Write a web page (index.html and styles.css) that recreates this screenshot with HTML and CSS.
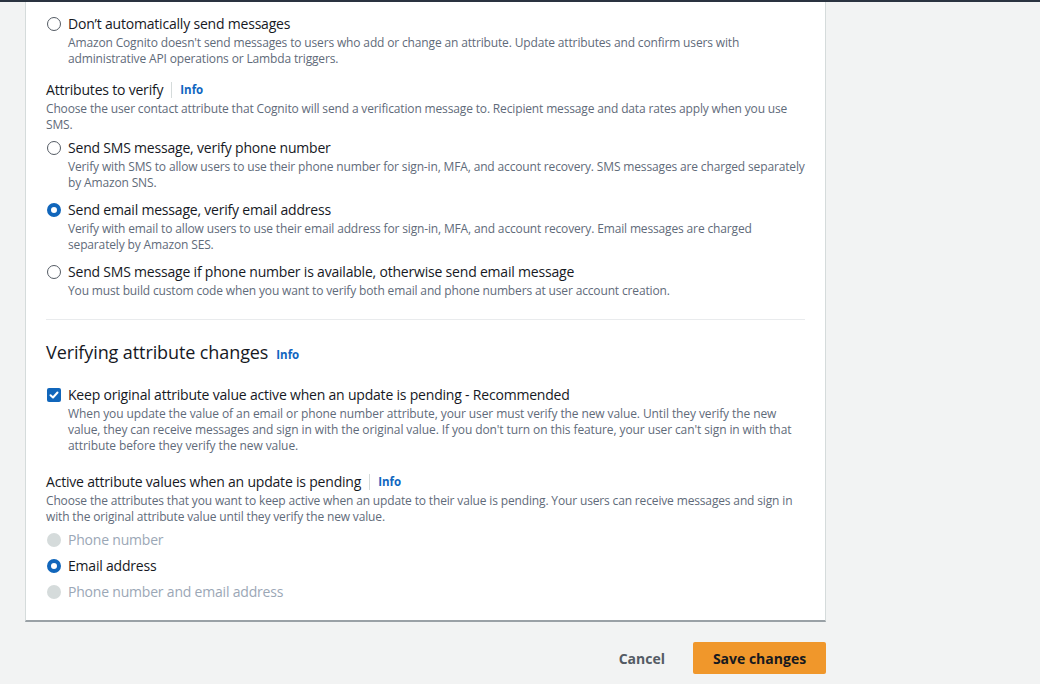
FILE: index.html
```html
<!DOCTYPE html>
<html lang="en">
<head>
<meta charset="utf-8">
<title>Verification settings</title>
<link rel="stylesheet" href="styles.css">
</head>
<body>
<div class="topbar"></div>
<div class="page">
  <div class="card">
    <div class="option first">
      <span class="radio"></span>
      <div class="opt-body">
        <div class="opt-title">Don’t automatically send messages</div>
        <div class="opt-desc">Amazon Cognito doesn't send messages to users who add or change an attribute. Update attributes and confirm users with administrative API operations or Lambda triggers.</div>
      </div>
    </div>

    <div class="field">
      <div class="field-label">Attributes to verify <span class="sep"></span><a class="info">Info</a></div>
      <div class="field-desc">Choose the user contact attribute that Cognito will send a verification message to. Recipient message and data rates apply when you use SMS.</div>
    </div>

    <div class="option">
      <span class="radio"></span>
      <div class="opt-body">
        <div class="opt-title">Send SMS message, verify phone number</div>
        <div class="opt-desc">Verify with SMS to allow users to use their phone number for sign-in, MFA, and account recovery. SMS messages are charged separately by Amazon SNS.</div>
      </div>
    </div>
    <div class="option">
      <span class="radio checked"></span>
      <div class="opt-body">
        <div class="opt-title">Send email message, verify email address</div>
        <div class="opt-desc">Verify with email to allow users to use their email address for sign-in, MFA, and account recovery. Email messages are charged separately by Amazon SES.</div>
      </div>
    </div>
    <div class="option">
      <span class="radio"></span>
      <div class="opt-body">
        <div class="opt-title">Send SMS message if phone number is available, otherwise send email message</div>
        <div class="opt-desc">You must build custom code when you want to verify both email and phone numbers at user account creation.</div>
      </div>
    </div>

    <hr class="divider">

    <h2 class="section-title">Verifying attribute changes <a class="info">Info</a></h2>

    <div class="option check-opt">
      <span class="checkbox">
        <svg width="10" height="10" viewBox="0 0 10 10"><path d="M1.5 5.2 L4 7.5 L8.5 2.5" fill="none" stroke="#fff" stroke-width="2" stroke-linecap="round" stroke-linejoin="round"/></svg>
      </span>
      <div class="opt-body">
        <div class="opt-title">Keep original attribute value active when an update is pending - Recommended</div>
        <div class="opt-desc loose">When you update the value of an email or phone number attribute, your user must verify the new value. Until they verify the new value, they can receive messages and sign in with the original value. If you don't turn on this feature, your user can't sign in with that attribute before they verify the new value.</div>
      </div>
    </div>

    <div class="field field2">
      <div class="field-label">Active attribute values when an update is pending <span class="sep"></span><a class="info">Info</a></div>
      <div class="field-desc">Choose the attributes that you want to keep active when an update to their value is pending. Your users can receive messages and sign in with the original attribute value until they verify the new value.</div>
    </div>

    <div class="simple-list">
      <div class="simple disabled"><span class="radio dis"></span>Phone number</div>
      <div class="simple"><span class="radio checked"></span>Email address</div>
      <div class="simple disabled"><span class="radio dis"></span>Phone number and email address</div>
    </div>
  </div>

  <div class="actions">
    <button class="btn-link">Cancel</button>
    <button class="btn-primary">Save changes</button>
  </div>
</div>
</body>
</html>
```

FILE: styles.css
```css
* { box-sizing: border-box; }
html, body { margin: 0; padding: 0; }
body {
  background: #f2f3f3;
  font-family: "Open Sans", "Noto Sans", Arial, sans-serif;
  color: #16191f;
  width: 1040px;
  height: 684px;
  overflow: hidden;
}
.topbar { height: 2px; background: #2a3340; }
.page { padding-left: 25px; width: 826px; }
.card {
  background: #fff;
  border-left: 1px solid #d5dbdb;
  border-right: 1px solid #d5dbdb;
  border-bottom: 2px solid #9aa1a6;
  padding: 12px 20px 18px 20px;
}
.option { display: flex; align-items: flex-start; margin-bottom: 9px; }
.option.first { margin-bottom: 13px; }
.radio {
  flex: none;
  width: 14px; height: 14px;
  border-radius: 50%;
  border: 1.5px solid #545b64;
  margin: 3px 7px 0 1px;
  background: #fff;
}
.radio.checked { border: 4px solid #1166bb; }
.radio.dis { border: none; background: #d5dbdb; }
.opt-body { flex: 1; }
.opt-title { font-size: 14px; line-height: 20px; letter-spacing: -0.2px; }
.opt-desc { font-size: 12px; line-height: 16px; color: #5f6b7a; margin-top: 1px; letter-spacing: -0.15px; }
.opt-desc.loose { letter-spacing: -0.1px; }
.field { margin-bottom: 5px; }
.field-label { font-size: 14px; line-height: 20px; display: flex; align-items: center; letter-spacing: -0.2px; }
.sep { display: inline-block; width: 1px; height: 16px; background: #d5dbdb; margin: 0 8px 0 8px; }
.info { color: #0f66bf; font-weight: 700; font-size: 11.5px; cursor: pointer; letter-spacing: 0; }
.field-desc { font-size: 12px; line-height: 16px; color: #5f6b7a; margin-top: 1px; letter-spacing: -0.15px; }
.divider { border: 0; border-top: 1px solid #e9ebed; margin: 20px 0 19px 0; }
.section-title { font-size: 18px; font-weight: 400; line-height: 26px; margin: 0 0 17px 0; display: flex; align-items: baseline; gap: 8px; letter-spacing: -0.1px; }
.section-title .info { font-size: 11.5px; }
.checkbox {
  flex: none;
  width: 14px; height: 14px;
  border-radius: 2px;
  background: #1166bb;
  margin: 3px 7px 0 1px;
  display: flex; align-items: center; justify-content: center;
}
.check-opt { margin-bottom: 18px; }
.field2 { margin-bottom: 5px; }
.simple-list { display: flex; flex-direction: column; gap: 6px; }
.simple { display: flex; align-items: center; font-size: 14px; line-height: 20px; letter-spacing: -0.2px; }
.simple .radio { margin-top: 0; }
.simple.disabled { color: #9ba7b6; }
.actions { display: flex; justify-content: flex-end; align-items: center; gap: 28px; margin-top: 20px; }
.btn-link {
  background: none; border: none; font-family: inherit;
  font-size: 14px; font-weight: 700; color: #545b64; padding: 0;
}
.btn-primary {
  background: #f0972b; border: none; border-radius: 2px;
  font-family: inherit; font-size: 14px; font-weight: 700; color: #16191f;
  width: 133px; height: 32px;
}
```
